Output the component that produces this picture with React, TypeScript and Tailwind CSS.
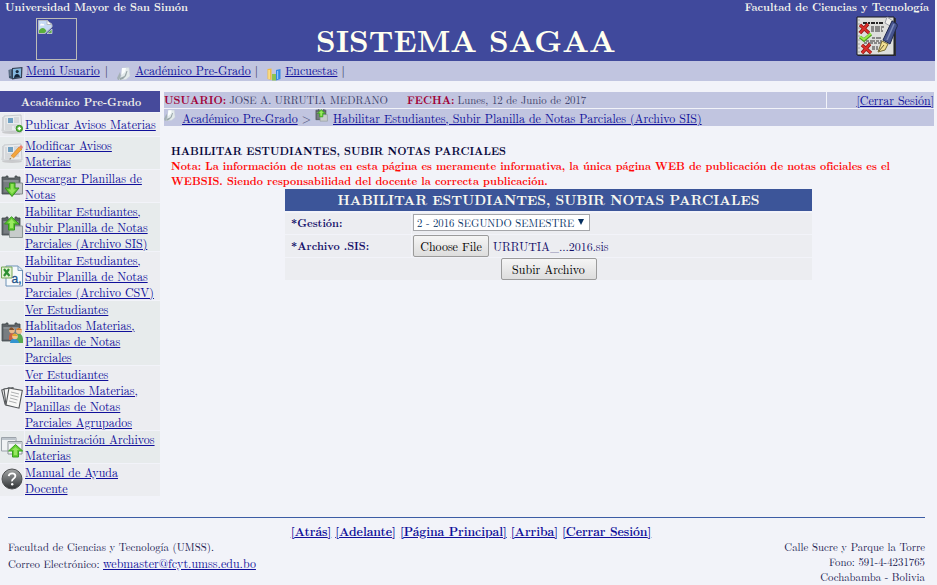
import React, { ReactNode } from "react";

type IconProps = { className?: string };

const UserCard = ({ className }: IconProps) => (
  <svg viewBox="0 0 15 14" className={className}>
    <path d="M0.5 4 4 3V13L1 12Z" fill="#41566e" />
    <path d="M4 2 14.5 1 14 12 4 13.5Z" fill="#344255" />
    <path d="M5 3 13.2 2.2 12.8 11 5 12Z" fill="#86b9df" />
    <circle cx="9.2" cy="5.6" r="1.6" fill="#18283b" />
    <path d="M6 12Q6.5 8 9 8T12 11Z" fill="#16263a" />
    <path d="M1.4 5H3M1.4 7H3M1.4 9H3" stroke="#b7c4d6" strokeWidth=".7" />
  </svg>
);

const Notebook = ({ className }: IconProps) => (
  <svg viewBox="0 0 14 14" className={className}>
    <path d="M0 11 3 5 5 13 1 13Z" fill="#a4b0b5" />
    <path d="M5 1 12 0.5 13 9 9 12.5 2.5 13 4 9Z" fill="#e3eaeb" stroke="#c8d0da" strokeWidth=".5" />
    <path d="M3 11 7.5 9 9.5 4 10.5 4 9 9 6 12 3 13Z" fill="#98a6a8" />
    <path d="M5 1 9 1 8 5 4.5 8Z" fill="#fbfefe" />
  </svg>
);

const Bars = ({ className }: IconProps) => (
  <svg viewBox="0 0 14 14" className={className}>
    <path d="M0.5 2 4.5 1.5V13L0.5 12Z" fill="#f1bd43" />
    <path d="M1.4 3H2.8V12H1.4Z" fill="#fbe39c" />
    <path d="M5 7H9V13.5H5Z" fill="#8cc454" />
    <path d="M9 3 13.5 2V12L9 13.5Z" fill="#3488e4" />
    <path d="M10 4H11.2V12H10Z" fill="#91c5fa" />
  </svg>
);

const BrokenImage = ({ className }: IconProps) => (
  <svg viewBox="0 0 16 16" className={className}>
    <path d="M1.5 1.5H10L15 5.5V8L8 14.5H1.5Z" fill="#c5d9f5" stroke="#b5b9c2" />
    <path d="M10 1.5V5.5H15Z" fill="#fff" stroke="#b5b9c2" />
    <path d="M2 14V11.5Q5 7.5 8 10L9.5 12 7.5 14Z" fill="#58ae3c" />
    <path d="M3 6Q4 3.5 5.5 5Q7 4 7.5 6.5H3Z" fill="#fff" />
    <path d="M10 14.5 15 10V14.5Z" fill="#62a94e" stroke="#dbe2ec" strokeWidth=".7" />
  </svg>
);

const GradedExam = ({ className }: IconProps) => (
  <svg viewBox="0 0 43 42" className={className}>
    <path d="M2 2H40V40H2Z" fill="#303136" />
    <path d="M1 1H38V39H1Z" fill="#dedfdc" stroke="#17181d" />
    <path d="M3 3V37" stroke="#a3a4a3" strokeDasharray="2 2" />
    <path d="M7 7H28" stroke="#252525" strokeWidth="1.8" strokeDasharray="4 1 2 1" />
    <path d="M15 11H28M15 13H26M15 15H27M16 22H26M10 25H26M8 27H25M16 31H22M16 33H22" stroke="#333" strokeWidth="1.2" strokeDasharray="3 1 5 1" />
    <path d="M4 9 13 17M12 8 4 17M6 29 15 37M14 28 6 37" stroke="#8c1511" strokeWidth="3.4" />
    <path d="M4 9 13 17M12 8 4 17M6 29 15 37M14 28 6 37" stroke="#dc302b" strokeWidth="2" />
    <path d="M4 21 8 24 15 18" fill="none" stroke="#4a9d1b" strokeWidth="3.4" />
    <path d="M4 20.5 8 23.5 15 17.5" fill="none" stroke="#9aeb48" strokeWidth="1.8" />
    <path d="M31 1 37 5 34 10 29 7Z" fill="#eeeeeb" stroke="#9b9da5" />
    <path d="M36 5 41 8Q42 10 40 13L34 28 27 24Z" fill="#46548f" stroke="#20294f" />
    <path d="M38 8 31 24" stroke="#7d8bbb" strokeWidth="1.5" />
    <path d="M26 25 32 28 29 34 22 36Z" fill="#f1df91" stroke="#756a33" />
    <path d="M23 35 28 29" stroke="#665c37" />
  </svg>
);

const Newspaper = () => (
  <>
    <ellipse cx="11" cy="19.5" rx="10" ry="1.5" fill="#c9cacc" />
    <path d="M3 3 20 2 21 18 1 18Z" fill="#e9ebed" stroke="#bec1c5" strokeWidth=".8" />
    <path d="M1 4H3V18H1Z" fill="#d1d3d6" />
    <path d="M7 5H12V10H7Z" fill="#70a1c3" />
    <path d="M4 6H6M4 8H6M4 10H6M13 5H18M13 7H18M13 9H18M4 12H18M4 14H11M4 16H11M13 14H18" stroke="#c3c6ca" />
  </>
);

const NewsAdd = () => (
  <svg viewBox="0 0 22 22" className="size-[22px] shrink-0">
    <Newspaper />
    <circle cx="18.3" cy="15.5" r="3.2" fill="#55b235" stroke="#339325" />
    <path d="M18.3 13.8V17.2M16.6 15.5H20" stroke="#fff" strokeWidth="1.5" />
  </svg>
);

const NewsEdit = () => (
  <svg viewBox="0 0 22 22" className="size-[22px] shrink-0">
    <Newspaper />
    <path d="M10 14 18 5 21 7 12.5 16Z" fill="#f4a63b" stroke="#d67f27" strokeWidth=".7" />
    <path d="M18 5 20 3 22 5 21 7Z" fill="#ec7e6d" />
    <path d="M10 14 12.5 16 8.5 17.5Z" fill="#edd9b1" />
    <path d="M9 16 10 17 8.5 17.5Z" fill="#333" />
  </svg>
);

const Clipboard = () => (
  <>
    <path d="M1 2H5V1H7V3H14V1H16V2H19V19H1Z" fill="#5d6367" stroke="#454b4f" strokeWidth=".8" />
    <path d="M2.5 5H17.5V17.5H2.5Z" fill="#777d81" />
    <path d="M2.5 5H17.5V7H2.5Z" fill="#888e92" />
  </>
);

const Download = () => (
  <svg viewBox="0 0 22 23" className="h-[23px] w-[22px] shrink-0">
    <Clipboard />
    <path d="M12 8H21.5V19H12Z" fill="#c4c9c9" stroke="#858d8c" />
    <path d="M8.5 8H14V13H18L11 21.5 4 13H8.5Z" fill="#62c932" stroke="#33921c" />
    <path d="M10 9H12.5V14.5H15L11 19 7 14.5H10Z" fill="#91e359" />
  </svg>
);

const Upload = ({ className = "h-[23px] w-[22px] shrink-0" }: IconProps) => (
  <svg viewBox="0 0 22 23" className={className}>
    <Clipboard />
    <path d="M8.5 13H12L14 10H21.5V21.5H8.5Z" fill="#c7cccb" stroke="#8d9695" />
    <path d="M7.5 14V8H3.5L10.5.7 18 8H13.5V14Z" fill="#64c934" stroke="#349a1c" />
    <path d="M9 12V7H7L10.5 3 14 7H12V12Z" fill="#9bea61" />
  </svg>
);

const CsvFile = () => (
  <svg viewBox="0 0 22 22" className="size-[22px] shrink-0">
    <path d="M5 1H17L21.5 5V21H5Z" fill="#f6f9fc" stroke="#6c91b6" />
    <path d="M17 1V5.5H21" fill="#dce9f4" stroke="#789bb9" />
    <path d="M.5 2H11V13H.5Z" fill="#e5f2d4" stroke="#76a857" />
    <path d="M3 4 8.5 11M8 4 3 11" stroke="#2d8f31" strokeWidth="2.2" />
    <text x="10.5" y="17.5" fontFamily="Liberation Sans" fontSize="12" stroke="#1d5288" strokeWidth=".3" fill="#1d5288">a,</text>
  </svg>
);

const People = () => (
  <svg viewBox="0 0 22 22" className="size-[22px] shrink-0">
    <Clipboard />
    <path d="M8 15Q9 9 13 12L13 18H8Z" fill="#cb6241" />
    <path d="M15 13Q21 10 22 17V21H15Z" fill="#59a852" />
    <circle cx="11" cy="8.5" r="2.8" fill="#e9b98a" />
    <path d="M8 8Q9 4 12 6L13.5 8Z" fill="#80502c" />
    <circle cx="18" cy="9" r="3" fill="#efbd8c" />
    <path d="M15 8Q17 4 21 8Z" fill="#c97326" />
    <path d="M9 21Q10 16 14 17T18 21Z" fill="#3194d0" />
    <circle cx="14" cy="14.5" r="2.8" fill="#f1c48d" />
    <path d="M11 14Q13 9 17 14Z" fill="#e2a72a" />
  </svg>
);

const Papers = () => (
  <svg viewBox="0 0 22 22" className="size-[22px] shrink-0" stroke="#55585b" strokeWidth="1.1">
    <path d="M.7 3 8 1 13 15 4 17Z" fill="#eee" />
    <path d="M3 2 12 .7 14 17 5 18Z" fill="#f5f5f5" />
    <path d="M8 1 21.3 3.5 18 21.2 5 18Z" fill="#f8f8f7" />
    <path d="M10 5 18 7M9.5 8 17.5 10M9 11 16.5 13M8 14 15.5 16" stroke="#a5a7a8" strokeWidth=".9" />
  </svg>
);

const FileAdmin = () => (
  <svg viewBox="0 0 22 22" className="size-[22px] shrink-0">
    <path d="M.5 1.5H15V15H.5Z" fill="#f0f2f4" stroke="#9ca3aa" />
    <path d="M1 2H14.5V4H1Z" fill="#bdc5cc" />
    <path d="M7 5.5H21V18H7Z" fill="#f4f5f7" stroke="#8b9399" />
    <path d="M7.5 6H20.5V8H7.5Z" fill="#c8ced3" />
    <path d="M11.5 21V15H7.5L14.5 8.5 21.7 15H17.5V21Z" fill="#65cf31" stroke="#389f20" />
    <path d="M13 19V14H11L14.5 11 18 14H16V19Z" fill="#97e661" />
  </svg>
);

const Help = () => (
  <svg viewBox="0 0 22 22" className="mb-[2px] size-[22px] shrink-0">
    <defs>
      <linearGradient id="help" x2="0" y2="1">
        <stop stopColor="#a2a4a4" />
        <stop offset=".55" stopColor="#66696b" />
        <stop offset="1" stopColor="#303234" />
      </linearGradient>
    </defs>
    <circle cx="11" cy="11" r="10" fill="url(#help)" stroke="#505254" />
    <path d="M7.7 8.2Q8 5.4 11.2 5.4T14.4 8.1Q14.4 9.6 12.5 10.8T11.2 13.4" fill="none" stroke="#fff" strokeWidth="1.8" />
    <circle cx="11.2" cy="16.2" r="1.2" fill="#fff" />
  </svg>
);

const A = ({ children, className = "" }: { children: ReactNode; className?: string }) => (
  <a href="#" className={`text-[#10109a] underline ${className}`}>
    {children}
  </a>
);

const menu: { icon: ReactNode; lines: string[]; size: string; bg: string }[] = [
  { icon: <NewsAdd />, lines: ["Publicar Avisos Materias"], size: "h-[23px]", bg: "bg-[#ecedf1] pb-px" },
  { icon: <NewsEdit />, lines: ["Modificar Avisos", "Materias"], size: "h-8", bg: "bg-[#e7ebec]" },
  { icon: <Download />, lines: ["Descargar Planillas de", "Notas"], size: "h-8", bg: "bg-[#ecedf1]" },
  { icon: <Upload />, lines: ["Habilitar Estudiantes,", "Subir Planilla de Notas", "Parciales (Archivo SIS)"], size: "h-12", bg: "bg-[#e7ebec]" },
  { icon: <CsvFile />, lines: ["Habilitar Estudiantes,", "Subir Planilla de Notas", "Parciales (Archivo CSV)"], size: "h-12", bg: "bg-[#ecedf1]" },
  { icon: <People />, lines: ["Ver Estudiantes", "Hablitados Materias,", "Planillas de Notas", "Parciales"], size: "h-16", bg: "bg-[#e7ebec]" },
  { icon: <Papers />, lines: ["Ver Estudiantes", "Habilitados Materias,", "Planillas de Notas", "Parciales Agrupados"], size: "h-16", bg: "bg-[#ecedf1]" },
  { icon: <FileAdmin />, lines: ["Administración Archivos", "Materias"], size: "h-8", bg: "bg-[#e7ebec]" },
  { icon: <Help />, lines: ["Manual de Ayuda", "Docente"], size: "h-8", bg: "bg-[#ecedf1]" },
];

const Header = () => (
  <header className="h-[61px] w-[935px] bg-[#40499c] text-[#f5f5ed]">
    <div className="flex h-[15px] justify-between pl-[5px] pr-[6px] text-[10.8px] font-bold leading-[14px]">
      <span>Universidad Mayor de San Simón</span>
      <span>Facultad de Ciencias y Tecnología</span>
    </div>
    <div className="flex h-[46px] pl-9">
      <div className="mt-[3px] h-[42px] w-[41px] border border-[#bdbdb7]">
        <BrokenImage className="size-4" />
      </div>
      <h1 className="ml-[239px] mt-[3px] w-[310px] whitespace-nowrap text-[30.8px] font-bold leading-[42px] text-[#fffff0]">SISTEMA SAGAA</h1>
      <GradedExam className="ml-[230px] mt-[1px] h-[42px] w-[43px] shrink-0" />
    </div>
  </header>
);

const Nav = () => (
  <nav className="flex h-5 w-[935px] items-start bg-[#c1c5e0] pl-2 leading-[17px] text-[#141440]">
    <UserCard className="mr-[3px] mt-[5px] h-[14px] w-[15px]" />
    <A>Menú Usuario</A>
    <span className="ml-[5px]">|</span>
    <Notebook className="ml-[9px] mr-1 mt-[6px] size-[14px]" />
    <A>Académico Pre-Grado</A>
    <span className="ml-1">|</span>
    <Bars className="ml-[9px] mr-1 mt-[6px] size-[14px]" />
    <A>Encuestas</A>
    <span className="ml-1">|</span>
  </nav>
);

const Sidebar = () => (
  <aside className="w-40">
    <h2 className="mb-px h-[21px] bg-[#464a9b] pl-[2px] text-center text-[10.8px] font-bold leading-[22px] text-[#f0f0ea]">Académico Pre-Grado</h2>
    <div className="flex flex-col gap-px">
      {menu.map((item, i) => (
        <div key={i} className={`flex items-center gap-[1px] ${item.size}`}>
          <div className={`flex h-full w-6 shrink-0 items-center justify-center ${item.bg}`}>{item.icon}</div>
          <div className={`flex h-full flex-1 flex-col justify-center whitespace-nowrap ${item.bg}`}>
            {item.lines.map((line) => (
              <span key={line} className="h-4 leading-[15px]">
                <A>{line}</A>
              </span>
            ))}
          </div>
        </div>
      ))}
    </div>
  </aside>
);

const UploadForm = () => (
  <form className="ml-[121px] flex w-[527px] flex-col gap-px text-[#15106a]">
    <h3 className="mb-px h-[22px] bg-[#3c5599] text-center text-[13.6px] font-bold leading-[21px] text-[#f8f8ef]">
      HABILITAR ESTUDIANTES, SUBIR NOTAS PARCIALES
    </h3>
    <div className="flex h-[21px] gap-px">
      <label className="w-[126px] bg-[#ecedf1] pl-[6px] text-[10.8px] font-bold leading-[20px]">*Gestión:</label>
      <div className="flex-1 bg-[#ecedf1] pl-px pt-px">
        <div className="flex h-[17px] w-[177px] items-center justify-between border border-[#a5a6aa] bg-white pl-[3px] pr-[5px] pt-px text-[10.67px] text-[#083468]">
          <span className="whitespace-nowrap">2 - 2016 SEGUNDO SEMESTRE</span>
          <svg viewBox="0 0 6 6" className="mb-[3px] size-[6px]"><path d="M0 0H6L3 6Z" fill="#062f60" /></svg>
        </div>
      </div>
    </div>
    <div className="flex h-[22px] gap-px">
      <label className="w-[126px] bg-[#ecedf1] pl-[6px] text-[10.8px] font-bold leading-[21px]">*Archivo .SIS:</label>
      <div className="flex flex-1 bg-[#ecedf1] pl-px">
        <button type="button" className="h-[22px] w-[76px] whitespace-nowrap rounded-[2px] border border-[#9b9b9b] bg-linear-to-b from-[#f5f5f5] to-[#dddddd] leading-5 text-black">Choose File</button>
        <span className="ml-1 leading-[22px] tracking-[-0.05px]">URRUTIA_...2016.sis</span>
      </div>
    </div>
    <div className="flex h-[22px] justify-center bg-[#ecedf1]">
      <button type="button" className="h-[22px] w-24 rounded-[2px] border border-[#9b9b9b] bg-linear-to-b from-[#f5f5f5] to-[#dddddd] leading-5 text-black">Subir Archivo</button>
    </div>
  </form>
);

const Main = () => (
  <main className="w-[770px] pt-px">
    <div className="flex h-4 gap-px text-[10.8px] leading-4 text-[#3c3f6a]">
      <div className="w-[662px] whitespace-nowrap bg-[#c1c5e0]">
        <b className="text-[#a00036]">USUARIO:</b>
        <span className="ml-[3px]">JOSE A. URRUTIA MEDRANO</span>
        <b className="ml-[19px] text-[#a00036]">FECHA:</b>
        <span className="ml-[3px]">Lunes, 12 de Junio de 2017</span>
      </div>
      <div className="flex-1 whitespace-nowrap bg-[#c1c5e0] text-right text-xs leading-[16px]">
        <A>[Cerrar Sesión]</A>
      </div>
    </div>
    <div className="mt-px flex h-[17px] items-start whitespace-nowrap bg-[#c1c5e0] leading-[18px] text-[#50537b]">
      <Notebook className="mr-[6px] h-[13px] w-3" />
      <A>Académico Pre-Grado</A>
      <span className="mx-1">&gt;</span>
      <Upload className="mr-[5px] h-[13px] w-[13px]" />
      <A>Habilitar Estudiantes, Subir Planilla de Notas Parciales (Archivo SIS)</A>
    </div>
    <div className="mt-[17px] h-[46px] whitespace-nowrap pl-[7px] text-[10.8px] font-bold leading-[15px]">
      <p className="text-[#08083c]">HABILITAR ESTUDIANTES, SUBIR NOTAS PARCIALES</p>
      <p className="tracking-[-0.03px] text-[#ff0808]">Nota: La información de notas en esta página es meramente informativa, la única página WEB de publicación de notas oficiales es el</p>
      <p className="text-[#ff0808]">WEBSIS. Siendo responsabilidad del docente la correcta publicación.</p>
    </div>
    <UploadForm />
  </main>
);

const Footer = () => (
  <footer className="ml-2 mt-[21px] w-[917px] border-t border-[#3c5ca5] pt-[6px] text-[#202050]">
    <div className="-mt-px flex h-4 justify-center gap-1 pl-[9px] font-bold leading-[16px]">
      {["Atrás", "Adelante", "Página Principal", "Arriba", "Cerrar Sesión"].map((t) => (
        <A key={t} className="tracking-[-0.06px]">[{t}]</A>
      ))}
    </div>
    <div className="flex justify-between text-[10.8px]">
      <div className="leading-4">
        <p>Facultad de Ciencias y Tecnología (UMSS).</p>
        <p className="leading-[15px]">Correo Electrónico: <A className="text-xs">webmaster@fcyt.umss.edu.bo</A></p>
      </div>
      <div className="text-right leading-[15px]">
        <p>Calle Sucre y Parque la Torre</p>
        <p>Fono: 591-4-4231765</p>
        <p>Cochabamba - Bolivia</p>
      </div>
    </div>
  </footer>
);

export default function App() {
  return (
    <div className="h-[585px] w-[937px] overflow-hidden bg-[#f2f3f9] font-['Latin_Modern_Roman','Liberation_Serif',serif] text-xs">
      <Header />
      <Nav />
      <div className="mt-[10px] flex gap-1">
        <Sidebar />
        <Main />
      </div>
      <Footer />
    </div>
  );
}
